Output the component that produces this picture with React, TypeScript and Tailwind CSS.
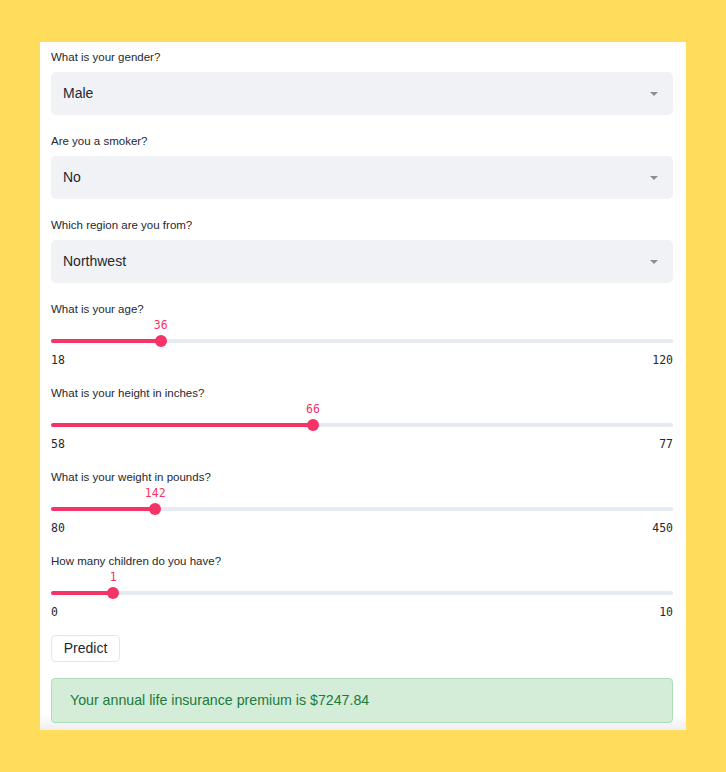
import React from "react";

const font = { fontFamily: '"Liberation Sans", Arial, sans-serif' };
const mono = { fontFamily: '"DejaVu Sans Mono", "Liberation Mono", monospace' };

function Select({ label, value }: { label: string; value: string }) {
  return (
    <div className="mb-4">
      <div className="h-5 leading-5 text-[11.5px] text-[#262730]">{label}</div>
      <div className="mt-[5px] h-[43px] rounded-[5px] bg-[#F0F2F6] flex items-center justify-between pl-3 pr-[15px]">
        <span className="text-[14px] text-[#262730]">{value}</span>
        <svg width="8" height="4" viewBox="0 0 8 4">
          <path d="M0 0 L8 0 L4 4 Z" fill="#8a8d94" />
        </svg>
      </div>
    </div>
  );
}

function Slider({ label, min, max, value }: { label: string; min: number; max: number; value: number }) {
  const pct = ((value - min) / (max - min)) * 100;
  return (
    <div className="mb-4">
      <div className="h-5 leading-5 text-[11.5px] text-[#262730]">{label}</div>
      <div className="relative h-3">
        <span
          className="absolute top-0 leading-3 text-[11.5px] text-[#F63366] -translate-x-1/2"
          style={{ ...mono, left: `${pct}%` }}
        >
          {value}
        </span>
      </div>
      <div className="relative h-5 flex items-center">
        <div className="w-full h-1 rounded-full bg-[#E6EAF1]">
          <div className="h-1 rounded-full bg-[#F63366]" style={{ width: `${pct}%` }} />
        </div>
        <div
          className="absolute top-1/2 w-3 h-3 rounded-full bg-[#F63366] -translate-x-1/2 -translate-y-1/2"
          style={{ left: `${pct}%` }}
        />
      </div>
      <div className="h-4 pt-[1px] leading-4 flex justify-between text-[11.5px] text-[#262730]" style={mono}>
        <span>{min}</span>
        <span>{max}</span>
      </div>
    </div>
  );
}

export default function App() {
  return (
    <div className="w-[726px] h-[772px] bg-[#FFDC5B] overflow-hidden" style={font}>
      <div className="ml-[40px] mt-[42px] w-[646px] h-[688px] pl-[11px] pr-[13px] pt-[5px] bg-[linear-gradient(to_bottom,#ffffff_calc(100%-16px),#efefef)]">
        <Select label="What is your gender?" value="Male" />
        <Select label="Are you a smoker?" value="No" />
        <Select label="Which region are you from?" value="Northwest" />
        <Slider label="What is your age?" min={18} max={120} value={36} />
        <Slider label="What is your height in inches?" min={58} max={77} value={66} />
        <Slider label="What is your weight in pounds?" min={80} max={450} value={142} />
        <Slider label="How many children do you have?" min={0} max={10} value={1} />
        <button className="block h-[27px] w-[69px] rounded-[4px] border border-[#E6E6EA] bg-white text-[14px] text-[#262730] mb-4">
          Predict
        </button>
        <div className="h-[45px] rounded-[4px] border border-[#ACDDB8] bg-[#D3EDD9] flex items-center pl-[18px] text-[14.2px] text-[#1D7A3A]">
          Your annual life insurance premium is $7247.84
        </div>
      </div>
    </div>
  );
}
